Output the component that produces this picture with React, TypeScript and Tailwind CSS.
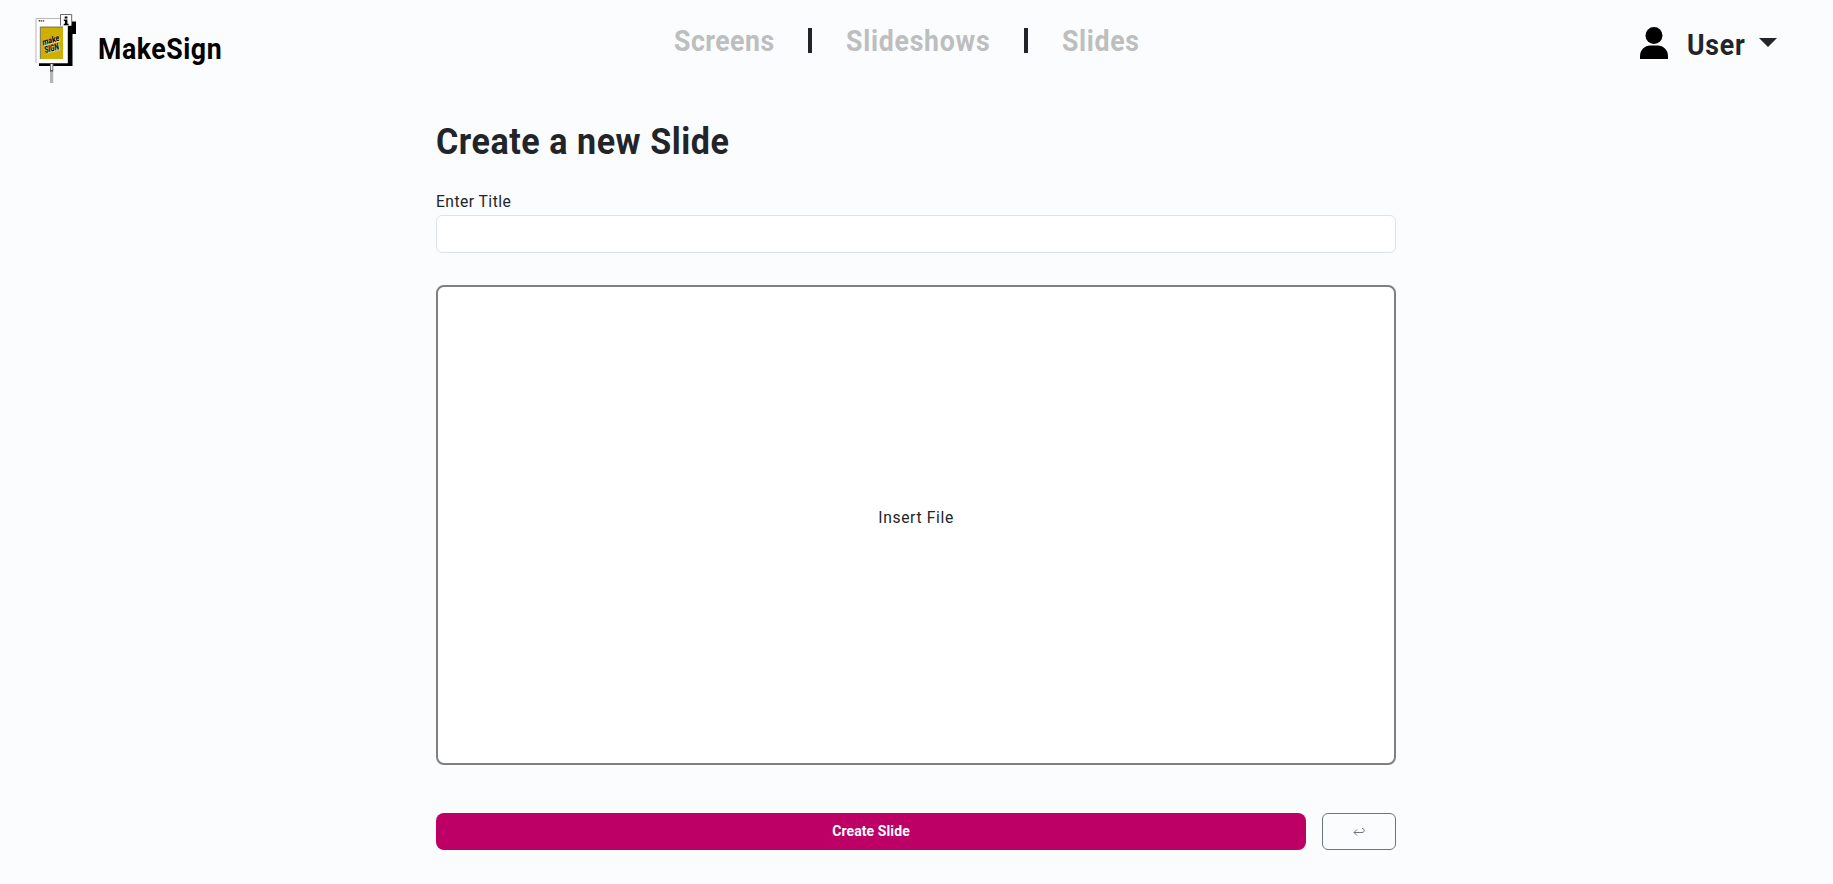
import React from "react";

function Logo() {
  return (
    <svg className="block h-[72px] w-[46px]" viewBox="34 12 46 72">
      <path d="M39 62h28V24h5v-2.500h4V34h-3.500v32H39z" fill="#000" />
      <path d="M36 18.500h24.500v-4h11.200v11.200H67.800V63.200H36z" fill="#fff" />
      <path d="M36 63.200V18.500h24.500" fill="none" stroke="#999" strokeWidth=".7" />
      <path d="M60.500 25.700V14.500h11.200v11.200" fill="none" stroke="#444" strokeWidth=".8" />
      <path d="M60.500 25.700h7.300" fill="none" stroke="#ddd" strokeWidth=".6" />
      <path d="M38.800 20.800h1.600M41.200 20.800h1.200M43.200 20.800h1" stroke="#111" strokeWidth="1.300" />
      <path d="M64.700 16.500h2.700v2h-2.700zM63.800 19.600h3.600v4.200h1.200v1.500h-4.900v-1.500h1.200v-2.700h-1.100z" fill="#000" />
      <path d="M40.500 27H63v32H40.500z" fill="#cfaf00" />
      <path d="M40.300 59V27H63" fill="none" stroke="#555" strokeWidth=".8" />
      <g transform="translate(43 45.600) rotate(-17) skewX(-8)">
        <text x=".9" y="1" fontSize="8.500" fontWeight="900" fill="#f4efd0" fontFamily="Roboto, sans-serif" textLength="17.500" lengthAdjust="spacingAndGlyphs">make</text>
        <text x="0" y="0" fontSize="8.500" fontWeight="900" fill="#111" fontFamily="Roboto, sans-serif" textLength="17.500" lengthAdjust="spacingAndGlyphs">make</text>
      </g>
      <g transform="translate(45.200 53.200) rotate(-15) skewX(-6)">
        <text x=".9" y=".9" fontSize="9.500" fontWeight="900" fill="#f4efd0" fontFamily="Roboto, sans-serif" textLength="14.500" lengthAdjust="spacingAndGlyphs">SIGN</text>
        <text x="0" y="0" fontSize="9.500" fontWeight="900" fill="#111" fontFamily="Roboto, sans-serif" textLength="14.500" lengthAdjust="spacingAndGlyphs">SIGN</text>
      </g>
      <path d="M50 64h3.200v19H50z" fill="#b5b5b5" />
      <path d="M50 63.500h.8V70H50zM52.400 63.500h.8V70h-.8zM50 70h3.200v1.500H50z" fill="#555" />
      <path d="M50.900 64h1.400v6h-1.400z" fill="#eee" />
    </svg>
  );
}

function Separator() {
  return <span className="mt-[-2px] h-[25px] w-[4px] bg-[#212529]" />;
}

export default function App() {
  return (
    <div className="flex h-[884px] w-full flex-col overflow-hidden bg-[#fbfcfe] font-['Roboto',sans-serif] text-[#212529]">
      <header className="grid h-[96px] shrink-0 grid-cols-[674px_464px_1fr] items-start">
        <div className="flex pt-[12px] pl-[34px]">
          <Logo />
          <span className="mt-[19px] ml-[18px] origin-left scale-x-[0.92] text-[29px] leading-[36px] font-bold tracking-[0.6px] whitespace-nowrap text-black">MakeSign</span>
        </div>
        <nav className="flex items-center justify-between pt-[23px] text-[29px] leading-[36px] font-bold text-[#bdbebe]">
          <span className="flex w-[99px]"><span className="origin-left scale-x-[0.92] tracking-[0.5px]">Screens</span></span>
          <Separator />
          <span className="flex w-[143px]"><span className="origin-left scale-x-[0.92] tracking-[0.8px]">Slideshows</span></span>
          <Separator />
          <span className="flex w-[76px]"><span className="origin-left scale-x-[0.92] tracking-[0.7px]">Slides</span></span>
        </nav>
        <div className="flex justify-end pt-[26px] pr-[56px]">
          <svg className="mt-px h-[32px] w-[28px]" viewBox="0 0 28 32">
            <circle cx="14" cy="8.500" r="8.500" />
            <path d="M0 32v-3c0-6 5-10.500 10-10.500h8c5 0 10 4.500 10 10.500v3z" />
          </svg>
          <span className="ml-[19px] flex w-[59px] text-[29px] leading-[38px] font-bold"><span className="origin-left scale-x-[0.92] tracking-[0.8px]">User</span></span>
          <svg className="mt-[12px] ml-[13px] h-[9px] w-[18px]" viewBox="0 0 18 9"><path d="M0 0h18L9 9z" fill="#212529" /></svg>
        </div>
      </header>

      <main className="ml-[436px] flex w-[960px] flex-col">
        <h1 className="mt-[22px] flex h-[48px] text-[37px] leading-[48px] font-bold"><span className="origin-left scale-x-[0.92] tracking-[0.6px]">Create a new Slide</span></h1>
        <label htmlFor="title" className="mt-[23px] flex h-[24px] text-[17px] leading-[24px]"><span className="origin-left scale-x-[0.92] tracking-[0.5px]">Enter Title</span></label>
        <input id="title" className="mt-[2px] h-[38px] rounded-[6px] border border-[#dee2e6] bg-white px-3 outline-none" />
        <div className="mt-[32px] flex h-[480px] items-center justify-center rounded-[8px] border-2 border-[#808080] bg-white text-[17px] leading-[24px]">
          <span className="mt-[-16px] scale-x-[0.92] tracking-[0.7px]">Insert File</span>
        </div>
        <div className="mt-[48px] flex h-[37px] gap-4">
          <button className="flex w-[870px] items-center justify-center rounded-[8px] bg-[#bc0066] text-[14px] font-bold tracking-[0.1px] text-white">Create Slide</button>
          <button aria-label="Back" className="flex w-[74px] items-center justify-center rounded-[6px] border border-[#6c757d]">
            <svg className="mt-px h-[9px] w-[12px]" viewBox="0 0 12 9" fill="none" stroke="#6c757d"><path d="M4 1.500L1 4.500l3 3M1 4.500h8c3 0 3-4 0-4" /></svg>
          </button>
        </div>
      </main>
    </div>
  );
}
